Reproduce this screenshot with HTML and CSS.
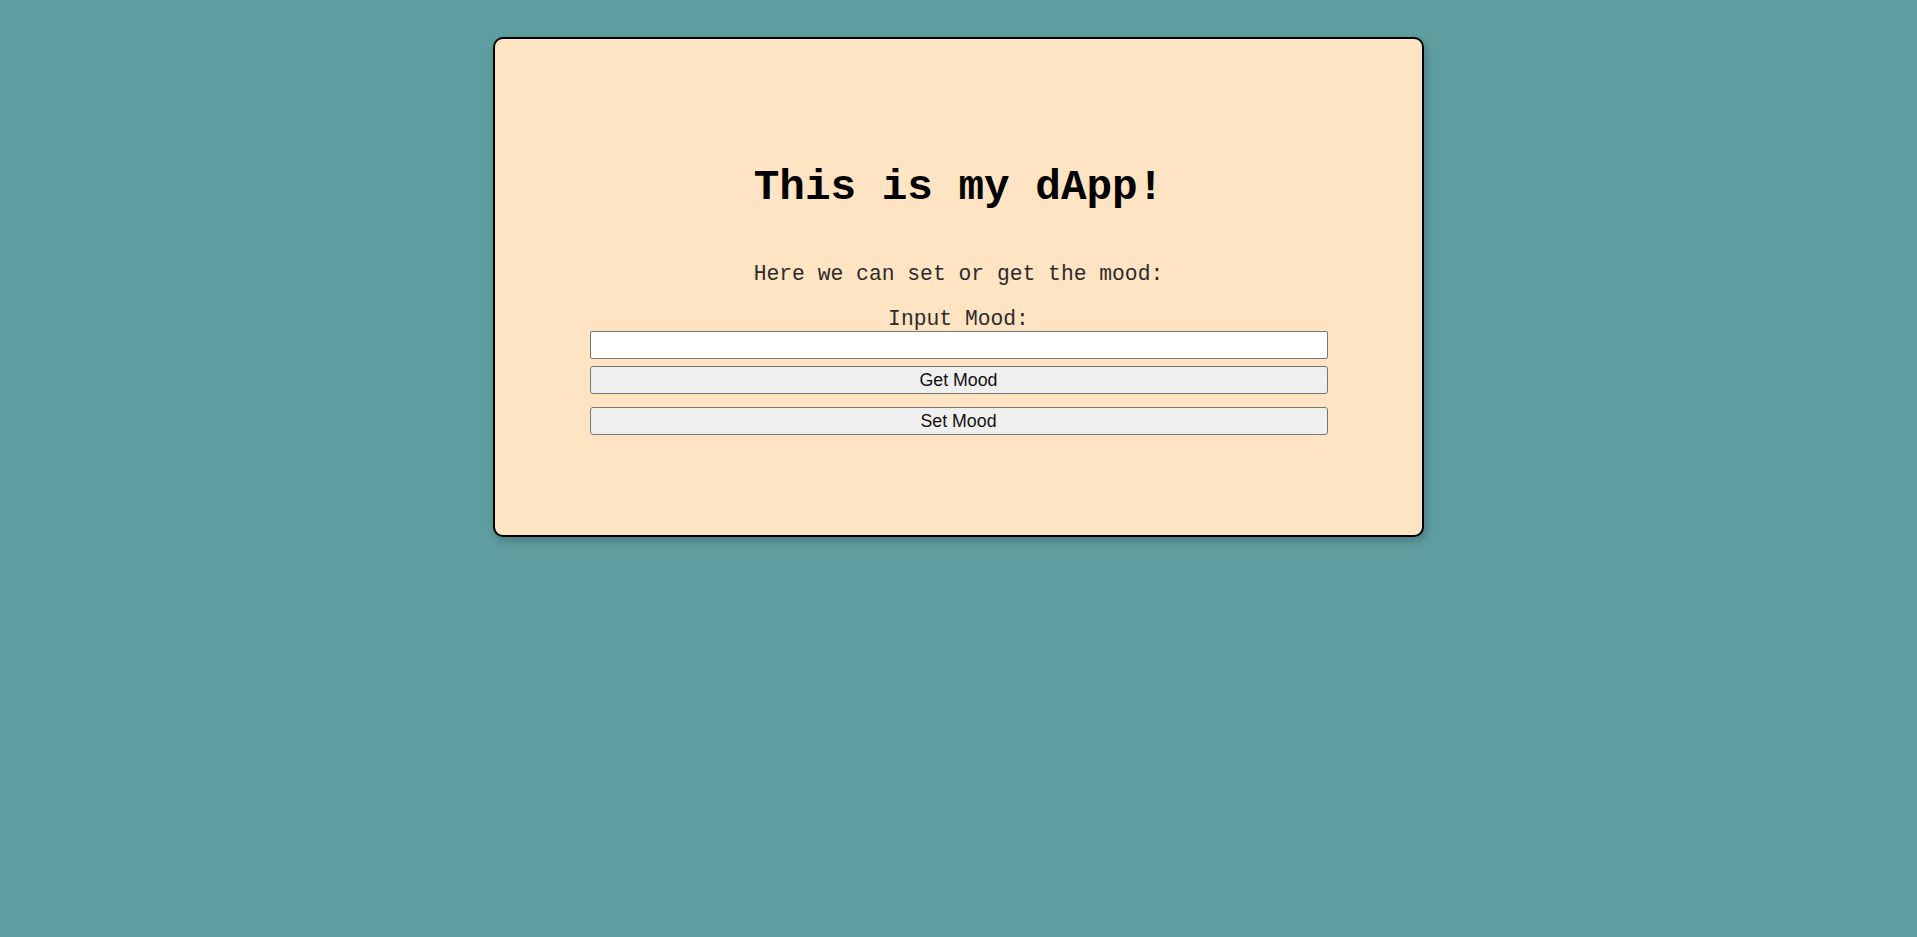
FILE: index.html
```html
<!DOCTYPE html>
<html lang="en">
<head>
<meta charset="utf-8">
<title>My dApp</title>
<link rel="stylesheet" href="styles.css">
</head>
<body>
<main class="card">
  <h1 class="title">This is my dApp!</h1>
  <p class="subtitle">Here we can set or get the mood:</p>
  <label class="label" for="mood">Input Mood:</label>
  <input class="mood-input" id="mood" type="text">
  <button class="btn btn-get" type="button">Get Mood</button>
  <button class="btn btn-set" type="button">Set Mood</button>
</main>
</body>
</html>
```

FILE: styles.css
```css
html, body {
  margin: 0;
  padding: 0;
}
body {
  background: #5f9ea0;
  min-height: 937px;
  padding-top: 37px;
  box-sizing: border-box;
  font-family: "Liberation Mono", "Courier New", monospace;
}
.card {
  width: 931px;
  height: 500px;
  box-sizing: border-box;
  margin: 0 auto;
  background: #ffe4c4;
  border: 2px solid #000;
  border-radius: 10px;
  box-shadow: 2px 4px 8px rgba(0, 0, 0, 0.22);
  display: flex;
  flex-direction: column;
  align-items: center;
  padding-top: 124px;
}
.title {
  margin: 0;
  font-size: 42.67px;
  line-height: 50px;
  font-weight: bold;
  color: #000;
}
.subtitle {
  margin: 49px 0 0;
  font-size: 21.33px;
  line-height: 25px;
  color: #2b2b2b;
}
.label {
  margin-top: 20px;
  font-size: 21.33px;
  line-height: 24px;
  color: #2b2b2b;
}
.mood-input {
  width: 738px;
  height: 28px;
  box-sizing: border-box;
  margin: 0;
  border: 1px solid #767676;
  border-radius: 2px;
  background: #fff;
  font-family: "Liberation Sans", Arial, sans-serif;
  font-size: 17.78px;
  padding: 1px 3px;
}
.btn {
  width: 738px;
  height: 28px;
  box-sizing: border-box;
  margin: 0;
  padding: 0;
  border: 1px solid #767676;
  border-radius: 3px;
  background: #efefef;
  color: #111;
  font-family: "Liberation Sans", Arial, sans-serif;
  font-size: 17.78px;
  line-height: 26px;
}
.btn-get {
  margin-top: 7px;
}
.btn-set {
  margin-top: 13px;
}
```
